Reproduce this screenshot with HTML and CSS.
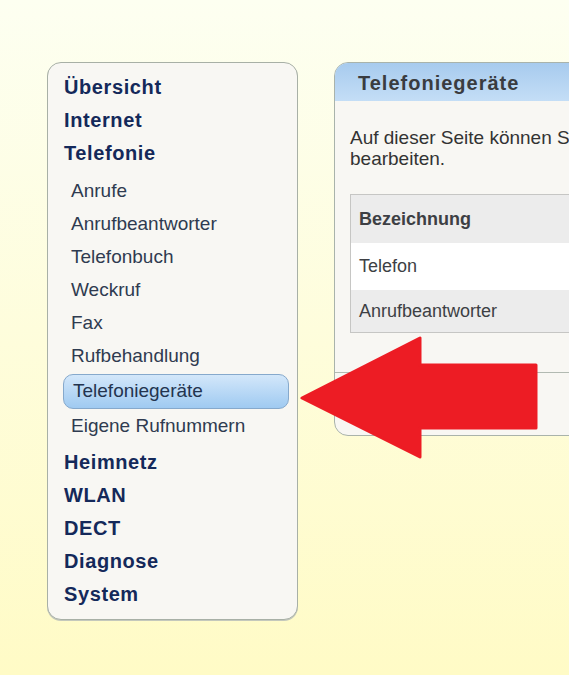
FILE: index.html
```html
<!doctype html>
<html>
<head>
	<meta charset="utf-8" />
	<title>Telefoniegeräte</title>
	<link rel="stylesheet" href="styles.css">
</head>
<body>
	<div id="menu">
		<a class="main" href="#">Übersicht</a>
		<a class="main" href="#">Internet</a>
		<a class="main" href="#">Telefonie</a>
		<div class="sub">
			<a href="#">Anrufe</a>
			<a href="#">Anrufbeantworter</a>
			<a href="#">Telefonbuch</a>
			<a href="#">Weckruf</a>
			<a href="#">Fax</a>
			<a href="#">Rufbehandlung</a>
			<a href="#" class="active">Telefoniegeräte</a>
			<a href="#">Eigene Rufnummern</a>
		</div>
		<a class="main" href="#">Heimnetz</a>
		<a class="main" href="#">WLAN</a>
		<a class="main" href="#">DECT</a>
		<a class="main" href="#">Diagnose</a>
		<a class="main" href="#">System</a>
	</div>

	<div id="page">
		<div class="page-head">Telefoniegeräte</div>
		<div class="page-body">
			<p>Auf dieser Seite können Sie Ihre Telefoniegeräte einrichten und<br>bearbeiten.</p>
			<table id="devices-table">
				<tr class="head"><th>Bezeichnung</th></tr>
				<tr class="row-a"><td>Telefon</td></tr>
				<tr class="row-b"><td>Anrufbeantworter</td></tr>
			</table>
		</div>
		<div class="page-foot"></div>
	</div>

	<svg class="arrow" width="569" height="675" viewBox="0 0 569 675">
		<polygon points="302,398 420,338 420,365 536,365 536,428 420,428 420,457"
			fill="#ed1c24" stroke="#ed1c24" stroke-width="3" stroke-linejoin="round" />
	</svg>
</body>
</html>
```

FILE: styles.css
```css
html, body { height: 100%; }
body {
	margin: 0;
	padding: 62px 0 0 47px;
	box-sizing: border-box;
	display: flex;
	align-items: flex-start;
	gap: 36px;
	overflow: hidden;
	font: 19px/33px "Liberation Sans", Arial, sans-serif;
	background: linear-gradient(#fdfff1, #fffbc6);
}
a { text-decoration: none; }

#menu {
	flex: 0 0 auto;
	width: 249px;
	padding: 8px 0 8px;
	background: #f8f7f3;
	border: 1px solid #a8b0a6;
	border-radius: 14px;
	box-shadow: 0 1px 0 #c4c8bc;
}
#menu .main {
	display: block;
	padding-left: 16px;
	font-size: 20px;
	font-weight: bold;
	letter-spacing: 0.6px;
	color: #14295a;
}
#menu .sub { margin: 4px 8px 4px 15px; }
#menu .sub a {
	display: block;
	padding-left: 8px;
	color: #2f3b50;
}
#menu .sub a.active {
	margin-top: 2px;
	padding: 0 0 1px 9px;
	line-height: 32px;
	color: #23344f;
	border: 1px solid #86a9cc;
	border-radius: 10px;
	background: linear-gradient(#d3e7fa, #9fcaf1);
}

#page {
	flex: 0 0 auto;
	width: 560px;
	background: #f8f7f3;
	border: 1px solid #a9b3ab;
	border-radius: 14px;
	overflow: hidden;
}
#page .page-head {
	height: 38px;
	padding-left: 23px;
	line-height: 41px;
	font-size: 20px;
	font-weight: bold;
	letter-spacing: 1px;
	color: #3a3c40;
	background: linear-gradient(#a7cbee, #c4def6);
}
#page .page-body { padding: 26px 0 39px 15px; }
#page p {
	margin: 0 0 25px;
	line-height: 21px;
	color: #333;
}

#devices-table {
	width: 100%;
	border-collapse: collapse;
	border: 1px solid #c6c6c4;
	font-size: 18px;
}
#devices-table th, #devices-table td {
	padding: 0 0 0 8px;
	text-align: left;
	color: #3d3f44;
}
#devices-table th { height: 48px; font-weight: bold; }
#devices-table .head { background: #ececec; }
#devices-table .row-a td { height: 47px; background: #fff; }
#devices-table .row-b td { height: 42px; background: #ececec; }

#page .page-foot {
	height: 62px;
	border-top: 1px solid #b2bab2;
}

.arrow { position: absolute; left: 0; top: 0; }
```
